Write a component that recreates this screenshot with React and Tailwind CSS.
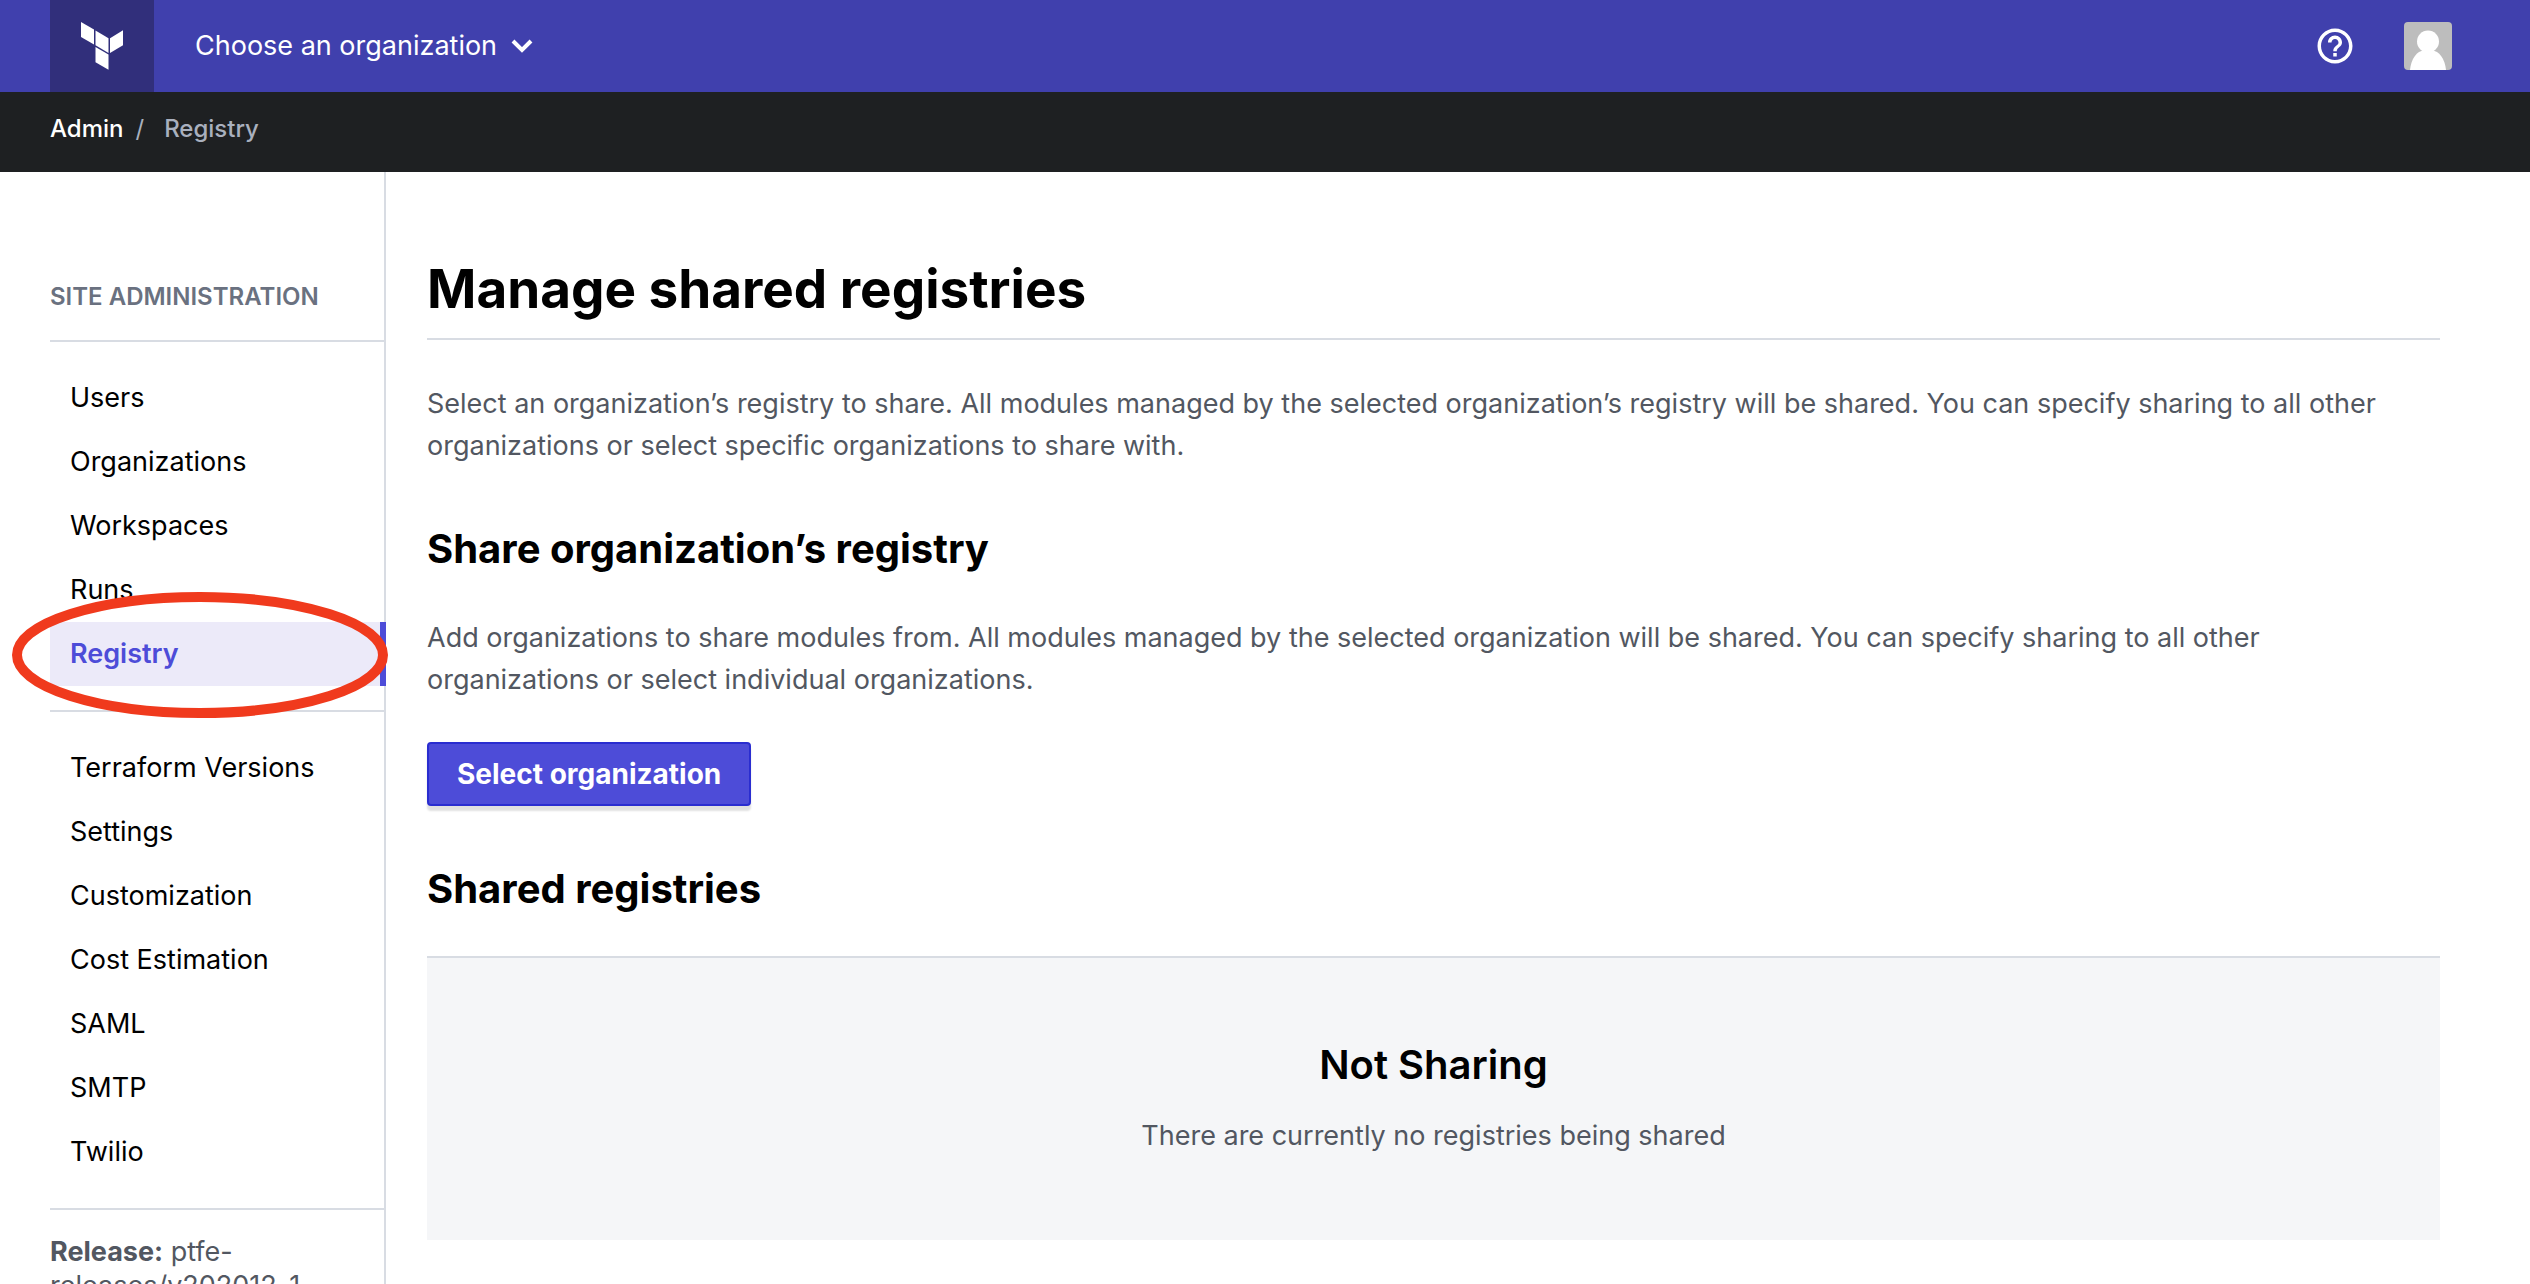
import React from "react";
import { MdHelpOutline } from "react-icons/md";

const primaryLinks = ["Users", "Organizations", "Workspaces", "Runs", "Registry"];
const settingsLinks = [
  "Terraform Versions",
  "Settings",
  "Customization",
  "Cost Estimation",
  "SAML",
  "SMTP",
  "Twilio",
];

function TerraformLogo() {
  return (
    <svg width="42" height="48" viewBox="0 0 42 48" fill="#fff" aria-hidden="true">
      <path d="M0 0 13 7.5V22.5L0 15Z" />
      <path d="M14.5 8.5 27.5 16.3V31L14.5 23.3Z" />
      <path d="M29 16.3 42 8.3V23.3L29 31Z" />
      <path d="M14.5 25 27.5 32.5V47.8L14.5 40.3Z" />
    </svg>
  );
}

function Avatar() {
  return (
    <svg className="block rounded" width="48" height="48" viewBox="0 0 48 48" aria-hidden="true">
      <rect width="48" height="48" fill="#bdbdbd" />
      <circle cx="24" cy="19.5" r="11" fill="#fff" />
      <path d="M6 48C7 37 13 28.5 20 28.5H28C35 28.5 41 37 42 48Z" fill="#fff" />
    </svg>
  );
}

function Header() {
  return (
    <header className="flex h-[92px] shrink-0 items-center bg-[#4040ad] pr-[78px] pl-[50px] text-white">
      <a
        href="#home"
        aria-label="Terraform home"
        className="flex h-full w-[104px] items-center justify-center bg-[#312f7b]"
      >
        <TerraformLogo />
      </a>
      <button type="button" className="ml-[41px] flex items-center gap-3.5">
        <span>Choose an organization</span>
        <svg width="22" height="16" viewBox="0 0 22 16" fill="none" aria-hidden="true">
          <path d="M2 3 11 12 20 3" stroke="#fff" strokeWidth="4" />
        </svg>
      </button>
      <div className="ml-auto flex items-center gap-12">
        <button type="button" aria-label="Help">
          <MdHelpOutline size={42} />
        </button>
        <button type="button" aria-label="Account">
          <Avatar />
        </button>
      </div>
    </header>
  );
}

function NavItem({ label, active }) {
  if (!active) {
    return (
      <li>
        <a href={`#${label}`} className="flex h-16 items-center pl-5 text-black">
          {label}
        </a>
      </li>
    );
  }
  return (
    <li className="relative -mr-[2px]">
      <a
        href={`#${label}`}
        aria-current="page"
        className="flex h-16 items-center border-r-6 border-[#4d4cd8] bg-[#eceaf9] pl-5 font-semibold text-[#4d4cd8]"
      >
        {label}
      </a>
      <svg
        className="pointer-events-none absolute -top-[30px] -left-[38px]"
        width="376"
        height="126"
        viewBox="0 0 376 126"
        fill="none"
        aria-hidden="true"
      >
        <ellipse cx="188" cy="63" rx="183" ry="58" stroke="#f03a1d" strokeWidth="10" />
      </svg>
    </li>
  );
}

function Sidebar() {
  return (
    <aside className="w-[386px] shrink-0 border-r-2 border-[#d8dce3] pt-[109px] pl-[50px]">
      <h2 className="pb-[27px] text-2xl font-semibold text-[#6a7180]">SITE ADMINISTRATION</h2>
      <nav aria-label="Site administration">
        <ul className="border-y-2 border-[#d8dce3] py-6">
          {primaryLinks.map((label) => (
            <NavItem key={label} label={label} active={label === "Registry"} />
          ))}
        </ul>
        <ul className="border-b-2 border-[#d8dce3] py-6">
          {settingsLinks.map((label) => (
            <NavItem key={label} label={label} />
          ))}
        </ul>
      </nav>
      <p className="pt-[25px] leading-[34px] text-[#525761]">
        <strong className="font-bold">Release:</strong> <span>ptfe-</span>
        <wbr />
        <span>releases/v202012-1</span>
      </p>
    </aside>
  );
}

function Main() {
  return (
    <main className="grow pt-[85px] pr-[90px] pl-[41px] text-[#525761]">
      <h1 className="border-b-2 border-[#d8dce3] pb-[17px] text-[53px] leading-[64px] font-bold text-black">
        Manage shared registries
      </h1>
      <p className="mt-[43px] pr-6">
        Select an organization’s registry to share. All modules managed by the selected
        organization’s registry will be shared. You can specify sharing to all other organizations
        or select specific organizations to share with.
      </p>
      <h2 className="mt-14 text-[40px] leading-[52px] font-bold text-black">
        Share organization’s registry
      </h2>
      <p className="mt-[42px] pr-6">
        Add organizations to share modules from. All modules managed by the selected organization
        will be shared. You can specify sharing to all other organizations or select individual
        organizations.
      </p>
      <button
        type="button"
        className="mt-[41px] block h-16 rounded border-2 border-[#2a2dd0] bg-[#4d4cd8] px-7 text-[28px] font-bold text-white shadow-[0_5px_2px_rgba(0,0,0,0.12)]"
      >
        Select organization
      </button>
      <h2 className="mt-[57px] text-[40px] leading-[52px] font-bold text-black">
        Shared registries
      </h2>
      <section className="mt-[41px] border-t-2 border-[#d8dce3] bg-[#f5f6f8] pt-[81px] pb-[83px] text-center">
        <h3 className="text-[40px] leading-[52px] font-semibold text-black">Not Sharing</h3>
        <p className="mt-6">There are currently no registries being shared</p>
      </section>
    </main>
  );
}

export default function App() {
  return (
    <div className="flex h-screen flex-col overflow-hidden bg-white font-['Inter',sans-serif] text-[27px] leading-[42px]">
      <Header />
      <nav
        aria-label="Breadcrumb"
        className="flex h-20 shrink-0 items-center bg-[#1e2022] px-[50px] pb-1.5 text-2xl font-medium text-[#a9b0be]"
      >
        <a href="#admin" className="text-white">
          Admin
        </a>
        <span className="mr-5 ml-3 font-normal">/</span>
        <span>Registry</span>
      </nav>
      <div className="flex grow">
        <Sidebar />
        <Main />
      </div>
    </div>
  );
}
